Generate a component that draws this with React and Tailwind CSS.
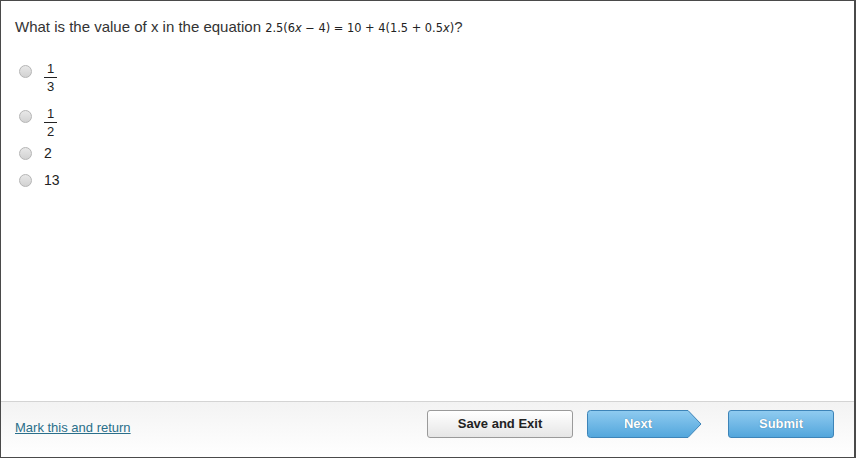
import React from "react";

function Radio({ className = "" }) {
  return (
    <span
      className={
        "inline-block h-[13px] w-[13px] shrink-0 rounded-full border border-[#b5b5b5] bg-gradient-to-b from-[#e8e8e8] to-[#d2d2d2] " +
        className
      }
    />
  );
}

function Frac({ n, d }) {
  return (
    <span className="inline-flex flex-col items-center text-[13px] leading-[13px] text-[#222]">
      <span className="px-[3px]">{n}</span>
      <span className="mt-[2px] h-px w-full bg-[#222]" />
      <span className="px-[3px] pt-[2px]">{d}</span>
    </span>
  );
}

export default function App() {
  return (
    <div className="flex h-[458px] w-[856px] flex-col border border-r-2 border-[#4a4a4a] bg-white font-['Liberation_Sans',Arial,sans-serif]">
      <main className="flex-1 pl-[14px] pt-[17px]">
        <p className="text-[15px] leading-[18px] text-[#333]">
          What is the value of x in the equation{" "}
          <span className="font-['DejaVu_Sans',sans-serif] text-[11.4px] text-[#222]">
            2.5(6<i>x</i> − 4) = 10 + 4(1.5 + 0.5<i>x</i>)
          </span>
          ?
        </p>

        <ul className="mt-[25px] flex flex-col pl-[4px]">
          <li className="flex h-[30px] items-start gap-[12px]">
            <Radio className="mt-[3px]" />
            <Frac n="1" d="3" />
          </li>
          <li className="mt-[15px] flex h-[30px] items-start gap-[12px]">
            <Radio className="mt-[3px]" />
            <Frac n="1" d="2" />
          </li>
          <li className="mt-[6px] flex h-[20px] items-center gap-[12px] text-[14px] text-[#222]">
            <Radio />
            <span>2</span>
          </li>
          <li className="mt-[7px] flex h-[20px] items-center gap-[12px] text-[14px] text-[#222]">
            <Radio />
            <span>13</span>
          </li>
        </ul>
      </main>

      <footer className="flex h-[56px] items-start border-t border-[#d4d4d4] bg-gradient-to-b from-[#f3f3f3] to-white pl-[14px] pr-[20px] pt-[8px]">
        <a href="#" className="mt-[8px] text-[13px] text-[#2a6f8a] underline">
          Mark this and return
        </a>

        <div className="ml-auto flex items-center">
          <button className="h-[28px] w-[146px] rounded-[3px] border border-[#9a9a9a] bg-gradient-to-b from-white to-[#e6e6e6] text-[13px] font-bold text-[#222]">
            Save and Exit
          </button>

          <div className="relative ml-[14px] h-[28px] w-[115px]">
            <svg className="absolute inset-0" width="115" height="28" viewBox="0 0 115 28">
              <defs>
                <linearGradient id="nx" x1="0" y1="0" x2="0" y2="1">
                  <stop offset="0" stopColor="#8fcbf0" />
                  <stop offset="1" stopColor="#52a6dc" />
                </linearGradient>
              </defs>
              <path d="M3.5 0.5 H101 L114 14 L101 27.5 H3.5 Q0.5 27.5 0.5 24.5 V3.5 Q0.5 0.5 3.5 0.5 Z" fill="url(#nx)" stroke="#3d84b8" />
            </svg>
            <span className="relative flex h-full w-[102px] items-center justify-center text-[13px] font-bold text-white [text-shadow:0_0_1px_#3a6f94]">
              Next
            </span>
          </div>

          <button className="ml-[26px] h-[28px] w-[106px] rounded-[3px] border border-[#3d84b8] bg-gradient-to-b from-[#8fcbf0] to-[#52a6dc] text-[13px] font-bold text-white [text-shadow:0_0_1px_#3a6f94]">
            Submit
          </button>
        </div>
      </footer>
    </div>
  );
}
